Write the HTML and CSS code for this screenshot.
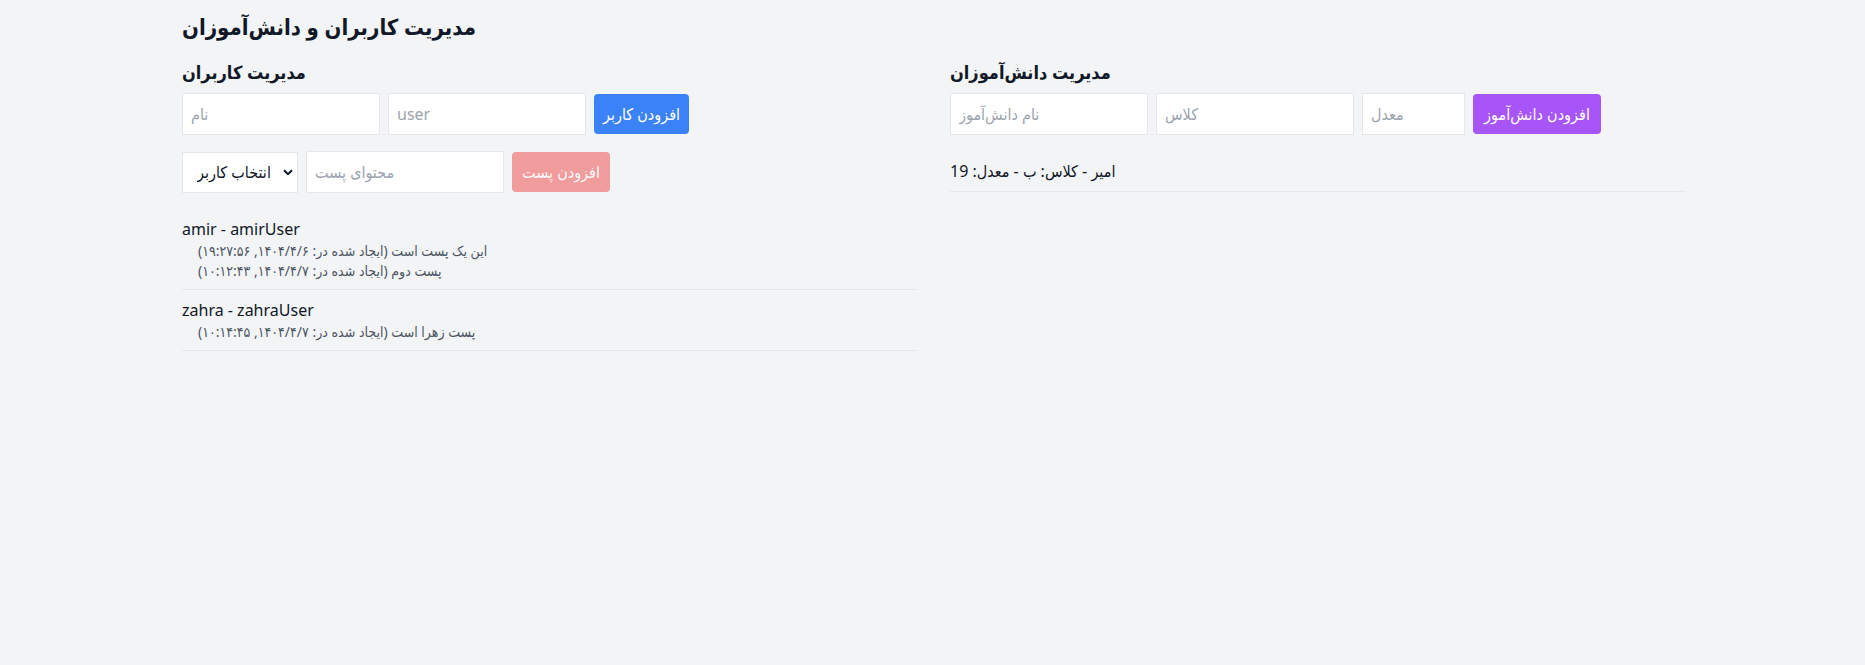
FILE: index.html
```html
<!DOCTYPE html>
<html lang="fa">
<head>
<meta charset="utf-8">
<title>مدیریت کاربران و دانش‌آموزان</title>
<link rel="stylesheet" href="styles.css">
</head>
<body>
<div class="page">
  <h1 class="title">مدیریت کاربران و دانش‌آموزان</h1>
  <div class="columns">
    <section class="panel">
      <h2 class="panel-title">مدیریت کاربران</h2>
      <div class="form-row">
        <input class="field" type="text" placeholder="نام">
        <input class="field" type="text" placeholder="user">
        <button class="btn btn-blue" type="button">افزودن کاربر</button>
      </div>
      <div class="form-row">
        <div class="select-wrap">
          <select class="select">
            <option>انتخاب کاربر</option>
          </select>
          <svg class="chevron" width="10" height="7" viewBox="0 0 10 7"><path d="M1 1.2 L5 5.2 L9 1.2" fill="none" stroke="#111827" stroke-width="2"/></svg>
        </div>
        <input class="field" type="text" placeholder="محتوای پست">
        <button class="btn btn-red" type="button" disabled>افزودن پست</button>
      </div>
      <ul class="list">
        <li class="item">
          <div class="item-name">amir - amirUser</div>
          <ul class="posts">
            <li class="post">این یک پست است (ایجاد شده در: ۱۴۰۴/۴/۶, ۱۹:۲۷:۵۶)</li>
            <li class="post">پست دوم (ایجاد شده در: ۱۴۰۴/۴/۷, ۱۰:۱۲:۴۳)</li>
          </ul>
        </li>
        <li class="item">
          <div class="item-name">zahra - zahraUser</div>
          <ul class="posts">
            <li class="post">پست زهرا است (ایجاد شده در: ۱۴۰۴/۴/۷, ۱۰:۱۴:۴۵)</li>
          </ul>
        </li>
      </ul>
    </section>
    <section class="panel">
      <h2 class="panel-title">مدیریت دانش‌آموزان</h2>
      <div class="form-row">
        <input class="field" type="text" placeholder="نام دانش‌آموز">
        <input class="field" type="text" placeholder="کلاس">
        <input class="field field-small" type="text" placeholder="معدل">
        <button class="btn btn-purple" type="button">افزودن دانش‌آموز</button>
      </div>
      <ul class="list">
        <li class="item">
          <div class="item-name">امیر - کلاس: ب - معدل: 19</div>
        </li>
      </ul>
    </section>
  </div>
</div>
</body>
</html>
```

FILE: styles.css
```css
* {
  box-sizing: border-box;
}

html, body {
  margin: 0;
  padding: 0;
}

body {
  background: #f3f4f6;
  color: #111827;
  font-family: "Noto Sans", "DejaVu Sans Condensed", "DejaVu Sans", sans-serif;
  font-size: 16px;
  line-height: 24px;
}

.page {
  padding: 10px 179px 16px 182px;
}

.title {
  margin: 0 0 16px 0;
  font-size: 22px;
  line-height: 32px;
  font-weight: 700;
}

.columns {
  display: grid;
  grid-template-columns: 1fr 1fr;
  column-gap: 32px;
}

.panel-title {
  margin: 0 0 7px 0;
  font-size: 18px;
  line-height: 28px;
  font-weight: 600;
}

.form-row {
  display: flex;
  align-items: center;
  gap: 8px;
  margin-bottom: 16px;
}

.field {
  width: 198px;
  height: 42px;
  padding: 8px;
  border: 1px solid #e5e7eb;
  background: #fff;
  font: inherit;
  color: #111827;
  outline: none;
  border-radius: 0;
}

.field::placeholder {
  color: #9ca3af;
}

.field-small {
  width: 103px;
}

.select-wrap {
  position: relative;
  display: flex;
}

.select {
  appearance: none;
  -webkit-appearance: none;
  width: 116px;
  height: 41px;
  padding: 0 24px 0 14px;
  border: 1px solid #e5e7eb;
  background: #fff;
  font: inherit;
  color: #111827;
  border-radius: 0;
}

.chevron {
  position: absolute;
  right: 5px;
  top: 17px;
  pointer-events: none;
}

.btn {
  height: 40px;
  padding: 0 4px;
  border: none;
  border-radius: 4px;
  color: #fff;
  font: inherit;
  white-space: nowrap;
  cursor: pointer;
}

.btn-blue {
  background: #3b82f6;
  width: 95px;
}

.btn-red {
  background: #ef4444;
  opacity: 0.5;
  width: 98px;
  cursor: not-allowed;
}

.btn-purple {
  background: #a855f7;
  width: 128px;
}

.list {
  list-style: none;
  margin: 0;
  padding: 0;
}

.item {
  padding: 8px 0;
  border-bottom: 1px solid #e5e7eb;
}

.posts {
  list-style: none;
  margin: 0;
  padding: 0 0 0 16px;
}

.post {
  font-size: 14px;
  line-height: 20px;
  color: #4b5563;
}
```
